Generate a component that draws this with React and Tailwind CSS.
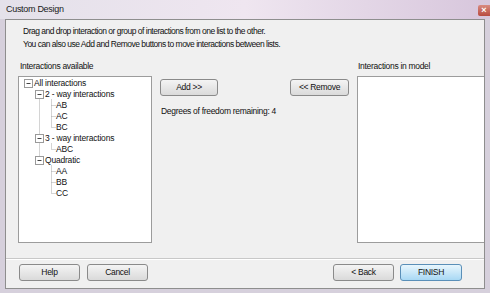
import React from "react";

const tree = [
  { text: "All interactions", level: 0 },
  { text: "2 - way interactions", level: 1 },
  { text: "AB", level: 2 },
  { text: "AC", level: 2 },
  { text: "BC", level: 2 },
  { text: "3 - way interactions", level: 1 },
  { text: "ABC", level: 2 },
  { text: "Quadratic", level: 1 },
  { text: "AA", level: 2 },
  { text: "BB", level: 2 },
  { text: "CC", level: 2 },
];

const indent = ["pl-[15px]", "pl-[26px]", "pl-[37px]"];

const rowY = (i) => 6.5 + 11 * i;

function MinusBox({ x, row }) {
  const cy = rowY(row);
  return (
    <g>
      <rect x={x - 3.5} y={cy - 4} width="8" height="8" fill="#fff" stroke="#9a9a9a" />
      <line x1={x - 1.5} x2={x + 2.5} y1={cy} y2={cy} stroke="#444" />
    </g>
  );
}

function TreeLines() {
  const dot = { stroke: "#a8a8a8", strokeDasharray: "1 1" };
  const leaf = (r) => <line key={r} x1="32.5" x2="37" y1={rowY(r)} y2={rowY(r)} {...dot} />;
  return (
    <svg className="absolute left-0 top-0" width="130" height="140">
      <line x1="20.5" x2="20.5" y1={rowY(1) + 4} y2={rowY(7) - 4} {...dot} />
      <line x1="32.5" x2="32.5" y1={rowY(1) + 5} y2={rowY(4)} {...dot} />
      <line x1="32.5" x2="32.5" y1={rowY(5) + 5} y2={rowY(6)} {...dot} />
      <line x1="32.5" x2="32.5" y1={rowY(7) + 5} y2={rowY(10)} {...dot} />
      {[2, 3, 4, 6, 8, 9, 10].map(leaf)}
      <MinusBox x={9} row={0} />
      <MinusBox x={20} row={1} />
      <MinusBox x={20} row={5} />
      <MinusBox x={20} row={7} />
    </svg>
  );
}

function Btn({ children, w = "w-[60px]", blue }) {
  return (
    <button
      className={`${w} h-[17px] rounded-[3px] border text-[8.5px] tracking-[-0.3px] leading-none ${
        blue
          ? "border-[#5a8fb8] bg-gradient-to-b from-[#e8f6fd] to-[#a8d8f4]"
          : "border-[#8a8a8a] bg-gradient-to-b from-[#f4f4f4] to-[#dadada]"
      }`}
    >
      {children}
    </button>
  );
}

export default function App() {
  return (
    <div className="w-[490px] h-[293px] flex flex-col overflow-hidden bg-[#d6d0dc] font-['Liberation_Sans',Arial,sans-serif] text-[#111]">
      {/* Title bar */}
      <div className="h-[19px] flex items-center justify-between pl-[6px] bg-gradient-to-r from-[#e4e1ea] via-[#efe6f0] to-[#d7c6dc]">
        <span className="text-[9px] tracking-[-0.3px] leading-none text-[#1a1a1a]">Custom Design</span>
        <div className="w-[12px] h-[11px] mt-[2px] rounded-l-[2px] bg-gradient-to-b from-[#d88a80] to-[#b84a40] text-white text-[9px] leading-[11px] text-center font-bold">
          ×
        </div>
      </div>

      {/* Body */}
      <div className="flex-1 ml-[5px] mr-[5px] mb-[4px] border border-[#8e8e8e] bg-[#f0f0f0] flex flex-col text-[8.5px] tracking-[-0.3px]">
        <div className="pt-[5px] pl-[17px] leading-[13px] tracking-[-0.5px]">
          <p>Drag and drop interaction or group of interactions from one list to the other.</p>
          <p>You can also use Add and Remove buttons to move interactions between lists.</p>
        </div>

        <div className="flex mt-[9px] pl-[12px]">
          {/* Left list */}
          <div className="w-[134px] flex flex-col">
            <span className="pl-[2px] h-[12px] leading-[12px]">Interactions available</span>
            <div className="relative mt-[4px] h-[167px] bg-white border border-[#9c9c9c]">
              <TreeLines />
              <div className="relative pt-[1px] tracking-[-0.2px]">
                {tree.map((n, i) => (
                  <div key={i} className={`h-[11px] leading-[11px] ${indent[n.level]}`}>
                    {n.text}
                  </div>
                ))}
              </div>
            </div>
          </div>

          {/* Middle */}
          <div className="w-[189px] ml-[8px] pt-[19px] flex flex-col">
            <div className="flex justify-between">
              <Btn w="w-[58px]">Add &gt;&gt;</Btn>
              <Btn w="w-[59px]">&lt;&lt; Remove</Btn>
            </div>
            <span className="mt-[9px] pl-[1px]">Degrees of freedom remaining: 4</span>
          </div>

          {/* Right list */}
          <div className="flex-1 ml-[8px] flex flex-col">
            <span className="pl-[1px] h-[12px] leading-[12px]">Interactions in model</span>
            <div className="mt-[4px] h-[167px] bg-white border border-[#9c9c9c] border-r-0" />
          </div>
        </div>

        <div className="mt-[15px] border-t border-[#c8c8c8] shadow-[0_1px_0_#fff]" />

        <div className="flex mt-[5px] pl-[13px] pr-[22px]">
          <Btn w="w-[61px]">Help</Btn>
          <div className="ml-[7px]">
            <Btn w="w-[61px]">Cancel</Btn>
          </div>
          <div className="flex-1" />
          <Btn w="w-[61px]">&lt; Back</Btn>
          <div className="ml-[6px]">
            <Btn w="w-[62px]" blue>
              FINISH
            </Btn>
          </div>
        </div>
      </div>
    </div>
  );
}
